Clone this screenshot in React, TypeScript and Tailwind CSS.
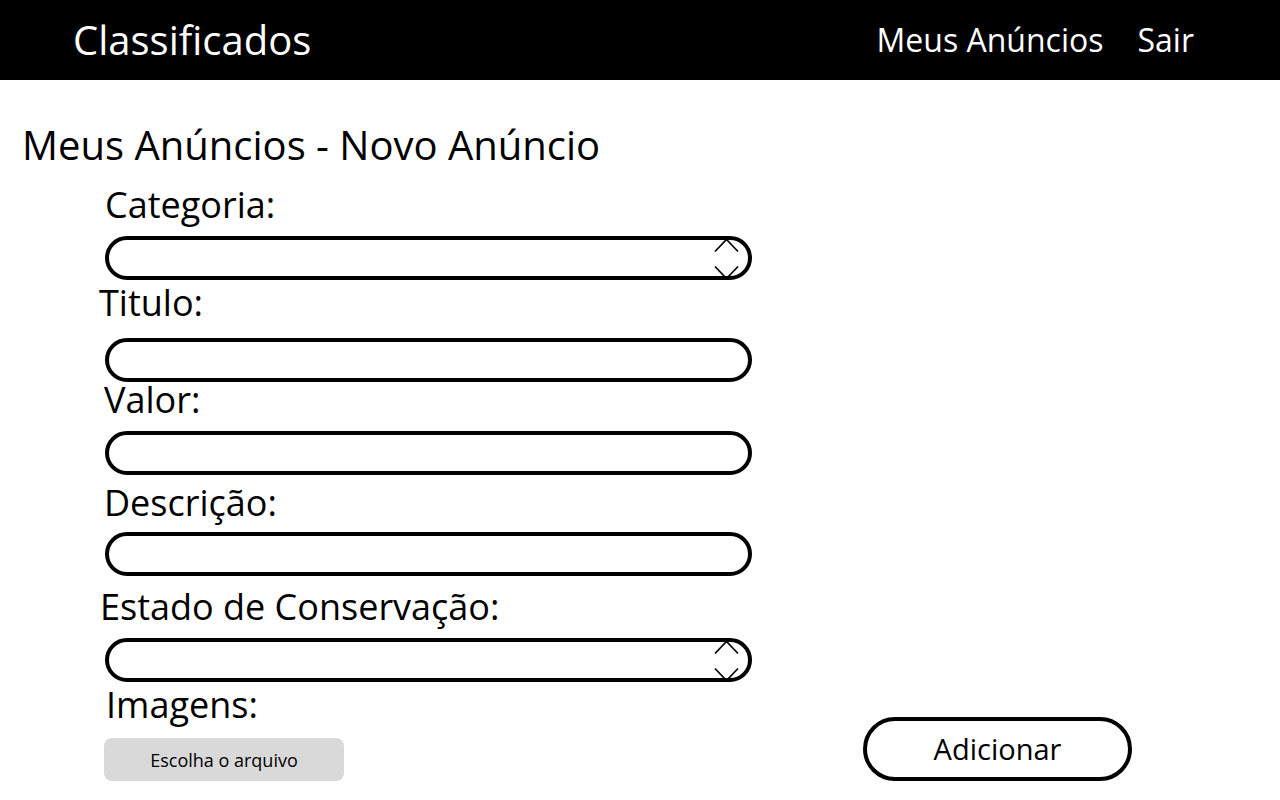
import React from "react";

const font = { fontFamily: "'Open Sans', 'Liberation Sans', sans-serif" };

function Chevrons() {
  return (
    <svg
      className="absolute right-[13px] top-0"
      width="25"
      height="44"
      viewBox="0 0 25 44"
      fill="none"
      stroke="black"
      strokeWidth="1.7"
    >
      <path d="M1 15.5 L12.5 3.5 L24 15.5" />
      <path d="M1 30.5 L12.5 42.5 L24 30.5" />
    </svg>
  );
}

function Box({ select }: { select?: boolean }) {
  return (
    <div className="relative w-[647px] h-[44px]">
      <div className="w-full h-full rounded-full border-4 border-black bg-white" />
      {select && <Chevrons />}
    </div>
  );
}

export default function App() {
  return (
    <div className="min-h-[800px] bg-white text-black" style={font}>
      <header className="h-20 bg-black text-white flex items-center justify-between pl-[73px] pr-[86px]">
        <div className="text-[40px] leading-[48px]">Classificados</div>
        <nav className="flex items-center gap-[34px] text-[32px] leading-[40px]">
          <a href="#">Meus Anúncios</a>
          <a href="#">Sair</a>
        </nav>
      </header>

      <main className="pl-[22px]">
        <h1 className="mt-[41px] text-[40px] leading-[48px]">
          Meus Anúncios - Novo Anúncio
        </h1>

        <div className="flex flex-col pl-[83px] text-[36px] leading-[40px]">
          <label className="mt-[16px]">Categoria:</label>
          <div className="mt-[11px]">
            <Box select />
          </div>

          <label className="mt-[3px] -ml-[6px]">Titulo:</label>
          <div className="mt-[15px]">
            <Box />
          </div>

          <label className="-mt-[2px] -ml-[1px]">Valor:</label>
          <div className="mt-[11px]">
            <Box />
          </div>

          <label className="mt-[8px] -ml-[1px]">Descrição:</label>
          <div className="mt-[9px]">
            <Box />
          </div>

          <label className="mt-[11px] -ml-[5px]">Estado de Conservação:</label>
          <div className="mt-[11px]">
            <Box select />
          </div>

          <label className="mt-[3px] ml-[1px]">Imagens:</label>
          <div className="-mt-[8px] flex items-end gap-[519px] -ml-[1px]">
            <button className="w-[240px] h-[43px] rounded-lg bg-[#d9d9d9] text-[18px] leading-[24px]">
              Escolha o arquivo
            </button>
            <button className="w-[269px] h-[64px] rounded-full border-4 border-black text-[29px] leading-[36px]">
              Adicionar
            </button>
          </div>
        </div>
      </main>
    </div>
  );
}
